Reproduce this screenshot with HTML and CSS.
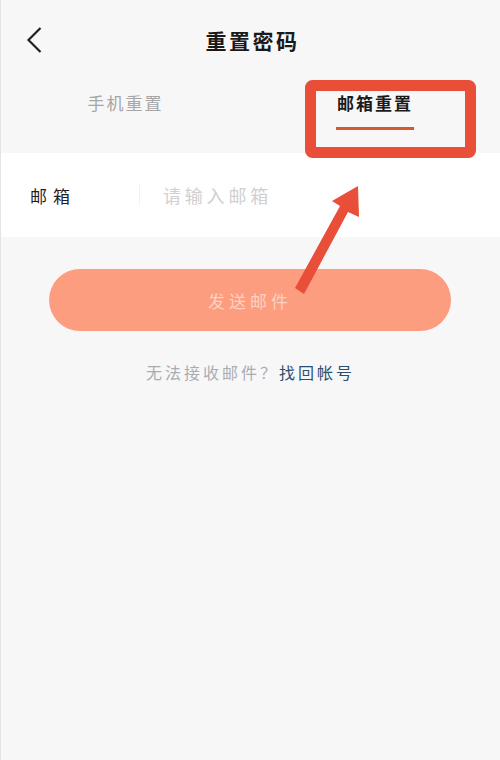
FILE: index.html
```html
<!DOCTYPE html>
<html lang="zh-CN">
<head>
<meta charset="utf-8">
<title>重置密码</title>
<link rel="stylesheet" href="styles.css">
</head>
<body>
<div class="screen">
  <header class="topbar">
    <svg class="back" width="18" height="28" viewBox="0 0 18 28"><path d="M14.5 2 L2.5 14 L14.5 26" fill="none" stroke="#222" stroke-width="2.2"/></svg>
    <h1 class="title">重置密码</h1>
  </header>
  <nav class="tabs">
    <div class="tab">手机重置</div>
    <div class="tab active">邮箱重置</div>
  </nav>
  <div class="field">
    <span class="label">邮箱</span>
    <span class="divider"></span>
    <span class="placeholder">请输入邮箱</span>
  </div>
  <div class="send">发送邮件</div>
  <p class="help">无法接收邮件？<a class="link">找回帐号</a></p>
  <svg class="annotation" width="500" height="320" viewBox="0 0 500 320">
    <rect x="310.5" y="85.5" width="160" height="67" rx="2" fill="none" stroke="#e94e38" stroke-width="11"/>
    <path d="M358 186 L332 201 L340 206 L295 288 L304 294 L348 212 L359 217 Z" fill="#e94e38"/>
  </svg>
</div>
</body>
</html>
```
FILE: styles.css
```css
* { box-sizing: border-box; }
html, body { margin: 0; padding: 0; }
body { font-family: "Noto Sans CJK SC", "Noto Sans", sans-serif; }
.screen {
  position: relative;
  width: 500px;
  height: 760px;
  overflow: hidden;
  background: #f7f7f8;
  border-left: 1px solid #e4e4e6;
}
.topbar {
  position: relative;
  height: 80px;
  display: flex;
  align-items: center;
  justify-content: center;
  padding-left: 4px;
}
.back { position: absolute; left: 25px; top: 26px; }
.title {
  margin: 0;
  font-size: 21px;
  font-weight: 700;
  letter-spacing: 2.5px;
  color: #1a1a1a;
  line-height: 1;
}
.tabs {
  height: 73px;
  display: grid;
  grid-template-columns: 249px 1fr;
}
.tab {
  justify-self: center;
  height: 50px;
  padding-top: 11px;
  font-size: 17px;
  line-height: 24px;
  letter-spacing: 2px;
  white-space: nowrap;
  color: #a6a6a6;
}
.tab.active {
  width: 78px;
  text-align: center;
  color: #1a1a1a;
  font-weight: 700;
  border-bottom: 3px solid #d9572f;
}
.field {
  height: 84px;
  background: #fff;
  display: flex;
  align-items: center;
  padding-left: 29px;
}
.label {
  width: 109px;
  font-size: 17px;
  letter-spacing: 6px;
  color: #1f1f1f;
}
.divider { width: 1px; height: 20px; background: #f0f0f0; }
.placeholder {
  margin-left: 23px;
  font-size: 18px;
  letter-spacing: 3.8px;
  color: #d0d0d2;
}
.send {
  margin: 32px 49px 0 48px;
  height: 62px;
  border-radius: 31px;
  background: #fd9d80;
  color: #fcd2c2;
  display: flex;
  align-items: center;
  justify-content: center;
  font-size: 17px;
  letter-spacing: 4px;
}
.help {
  margin: 29px 0 0 0;
  text-align: center;
  font-size: 16px;
  line-height: 24px;
  letter-spacing: 3px;
  white-space: nowrap;
  color: #a9adb2;
}
.link { color: #2c4f70; }
.annotation { position: absolute; left: -1px; top: 0; pointer-events: none; }
```
